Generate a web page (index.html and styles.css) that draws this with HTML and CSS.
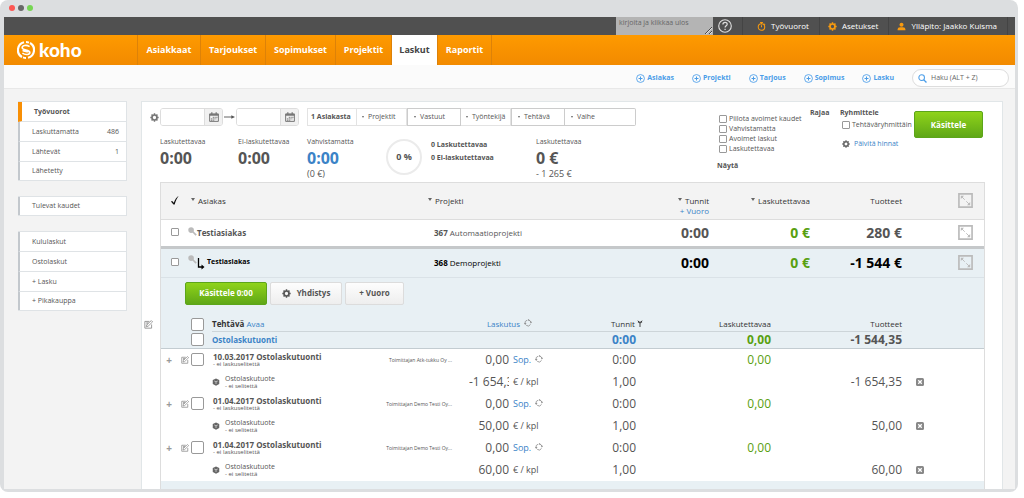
FILE: index.html
```
<!DOCTYPE html>
<html lang="fi">
<head>
    <meta charset="UTF-8">
    <meta name="viewport" content="width=device-width, initial-scale=1.0">
    <title>Koho - Laskut</title>
    <link rel="stylesheet" href="styles.css">
</head>
<body>
    <!-- Icons used on the page -->
    <svg class="sprite" aria-hidden="true">
        <symbol id="i-gear" viewBox="0 0 16 16">
            <circle cx="8" cy="8" r="4.4" fill="none" stroke="currentColor" stroke-width="3"/>
            <path d="M8 0.6v3M8 12.4v3M0.6 8h3M12.4 8h3M2.8 2.8l2 2M11.2 11.2l2 2M2.8 13.2l2-2M11.2 4.8l2-2" stroke="currentColor" stroke-width="2.6"/>
        </symbol>
        <symbol id="i-plus" viewBox="0 0 16 16">
            <circle cx="8" cy="8" r="7" fill="none" stroke="currentColor" stroke-width="1.5"/>
            <path d="M8 4.5v7M4.5 8h7" stroke="currentColor" stroke-width="1.8"/>
        </symbol>
        <symbol id="i-calendar" viewBox="0 0 16 16">
            <path d="M1 3h14v12H1z" fill="none" stroke="currentColor" stroke-width="1.6"/>
            <path d="M1 4.5h14" stroke="currentColor" stroke-width="3"/>
            <path d="M4.5 0.5v4M11.5 0.5v4" stroke="currentColor" stroke-width="2"/>
            <path d="M6 8.5h8M3 11h9M3 13.2h6" stroke="currentColor" stroke-width="1.5" stroke-dasharray="2 0.8"/>
        </symbol>
        <symbol id="i-expand" viewBox="0 0 16 16">
            <path d="M1 1h14v14H1z" fill="none" stroke="currentColor" stroke-width="1.8"/>
            <path d="M4 4l3.2 3.2M8.8 8.8L12 12" fill="none" stroke="currentColor" stroke-width="1"/>
            <path d="M3 3h3.4L3 6.4zM13 13H9.6L13 9.6z" fill="currentColor"/>
        </symbol>
        <symbol id="i-key" viewBox="0 0 16 16">
            <circle cx="5.5" cy="5.5" r="5" fill="currentColor"/>
            <path d="M8 8l6.5 6.5" stroke="currentColor" stroke-width="3"/>
        </symbol>
        <symbol id="i-edit" viewBox="0 0 16 16">
            <path d="M13.5 8v6.5h-12v-12h8" fill="none" stroke="currentColor" stroke-width="1.5"/>
            <path d="M4 12l1-3.4L13 1l2.3 2.3-8 7.8zM4 7h3M4 5h4" fill="none" stroke="currentColor" stroke-width="1.4"/>
        </symbol>
        <symbol id="i-refresh" viewBox="0 0 16 16">
            <path d="M2 9.5a6 6 0 0 1 4-7M9.5 2.2a6 6 0 0 1 4.3 4.6M13 11a6 6 0 0 1-8.5 1.8" fill="none" stroke="currentColor" stroke-width="1.6"/>
            <path d="M0 8l2.4 4L5 8.4zM12 8.5l3.6-.6L14 4zM8 0l-.5 4L11 2z" fill="currentColor"/>
        </symbol>
        <symbol id="i-cube" viewBox="0 0 16 16">
            <path d="M8 1l6.5 3v8L8 15.4 1.5 12V4z" fill="currentColor"/>
            <path d="M4.5 6L8 7.6 11.500 6M8 7.600V12" fill="none" stroke="#fff" stroke-width="1.1"/>
        </symbol>
        <symbol id="i-delete" viewBox="0 0 16 16">
            <rect width="16" height="16" rx="3" fill="currentColor"/>
            <path d="M4.5 4.5l7 7M11.5 4.5l-7 7" stroke="#fff" stroke-width="2.6"/>
        </symbol>
    </svg>

    <div class="window">
        <div class="titlebar">
            <span class="dot red"></span>
            <span class="dot gray"></span>
            <span class="dot green"></span>
        </div>

        <div class="topbar">
            <textarea class="note" aria-label="Muistio" placeholder="kirjoita ja klikkaa ulos"></textarea>
            <a class="help" href="#" aria-label="Ohje">
                <svg class="icon-help" viewBox="0 0 16 16"><circle cx="8" cy="8" r="7.2" fill="none" stroke="currentColor" stroke-width="1.3"/><path d="M5.6 6.3c0-3.3 4.9-3.2 4.9-.3 0 1.7-2.4 1.8-2.4 3.7M8.1 11v1.6" fill="none" stroke="currentColor" stroke-width="1.4"/></svg>
            </a>
            <a href="#">
                <svg class="icon" viewBox="0 0 16 16"><circle cx="8" cy="9" r="5.8" fill="none" stroke="currentColor" stroke-width="1.8"/><path d="M5.5 1h5M8 1v3M8 9.5V5.8M12.8 3.2l1.6 1.6" stroke="currentColor" stroke-width="1.8"/></svg>
                Työvuorot
            </a>
            <a href="#"><svg class="icon"><use href="#i-gear"/></svg>Asetukset</a>
            <a href="#">
                <svg class="icon" viewBox="0 0 16 16"><circle cx="8" cy="5" r="3.6" fill="currentColor"/><path d="M1 14.5c0-5 3-5 7-5s7 0 7 5z" fill="currentColor"/></svg>
                Ylläpito: Jaakko Kuisma
            </a>
        </div>

        <header class="navbar">
            <a class="brand" href="#">
                <svg class="brand-mark" viewBox="0 0 18 18"><path d="M7 1.3A8 8 0 0 0 5 16M11 16.700A8 8 0 0 0 13 2" fill="none" stroke="#fff" stroke-width="2.2"/><path d="M9 1a8 8 0 0 1 3 .6M6 16.400a8 8 0 0 0 3 .6" fill="none" stroke="#fff" stroke-width="1.8"/><path d="M12.600 5.600C9 3.400 5 4.600 5.200 7c.2 2.200 7.400 1.800 7.600 4.200.1 2.300-4 3.300-7.400 1M5.600 9.400c1.800 1.600 5 .6 5.400 2" fill="none" stroke="#fff" stroke-width="1.600"/></svg>
                koho
            </a>
            <nav>
                <a href="#">Asiakkaat</a>
                <a href="#">Tarjoukset</a>
                <a href="#">Sopimukset</a>
                <a href="#">Projektit</a>
                <a class="active" href="#">Laskut</a>
                <a href="#">Raportit</a>
            </nav>
        </header>

        <div class="actions">
            <a href="#"><svg class="icon"><use href="#i-plus"/></svg>Asiakas</a>
            <a href="#"><svg class="icon"><use href="#i-plus"/></svg>Projekti</a>
            <a href="#"><svg class="icon"><use href="#i-plus"/></svg>Tarjous</a>
            <a href="#"><svg class="icon"><use href="#i-plus"/></svg>Sopimus</a>
            <a href="#"><svg class="icon"><use href="#i-plus"/></svg>Lasku</a>
            <label class="search">
                <svg class="icon" viewBox="0 0 16 16"><circle cx="6.5" cy="6.5" r="5" fill="none" stroke="currentColor" stroke-width="1.8"/><path d="M10 10l5 5" stroke="currentColor" stroke-width="2.4"/></svg>
                <input type="text" aria-label="Haku" placeholder="Haku (ALT + Z)">
            </label>
        </div>

        <div class="content">
            <aside class="sidebar">
                <div class="menu">
                    <a class="current" href="#">Työvuorot</a>
                    <a href="#">Laskuttamatta <span>486</span></a>
                    <a href="#">Lähtevät <span>1</span></a>
                    <a href="#">Lähetetty</a>
                </div>
                <div class="menu">
                    <a href="#">Tulevat kaudet</a>
                </div>
                <div class="menu">
                    <a href="#">Kululaskut</a>
                    <a href="#">Ostolaskut</a>
                    <a href="#">+ Lasku</a>
                    <a href="#">+ Pikakauppa</a>
                </div>
            </aside>

            <main class="panel">
                <div class="panel-head">
                    <div class="overview">
                        <div class="filters">
                            <svg class="icon filter-gear"><use href="#i-gear"/></svg>
                            <div class="date"><input type="text" aria-label="Alkaen"><button aria-label="Valitse alkupäivä"><svg class="icon-cal"><use href="#i-calendar"/></svg></button></div>
                            <svg class="arrow" viewBox="0 0 12 6"><path d="M0 3h10" stroke="currentColor"/><path d="M8 1l4 2-4 2z" fill="currentColor"/></svg>
                            <div class="date"><input type="text" aria-label="Päättyen"><button aria-label="Valitse loppupäivä"><svg class="icon-cal"><use href="#i-calendar"/></svg></button></div>
                            <div class="filter-group">
                                <button class="chosen">1 Asiakasta</button>
                                <button><i class="caret"></i>Projektit</button>
                                <button class="boxed"><i class="caret"></i>Vastuut</button>
                                <button><i class="caret"></i>Työntekijä</button>
                                <button class="boxed"><i class="caret"></i>Tehtävä</button>
                                <button class="boxed"><i class="caret"></i>Vaihe</button>
                            </div>
                        </div>
                        <div class="stats">
                            <div class="stat">
                                <span>Laskutettavaa</span>
                                <strong>0:00</strong>
                            </div>
                            <div class="stat">
                                <span>Ei-laskutettavaa</span>
                                <strong>0:00</strong>
                            </div>
                            <div class="stat">
                                <span>Vahvistamatta</span>
                                <strong class="blue">0:00</strong>
                                <small>(0 €)</small>
                            </div>
                            <div class="ring">0 %</div>
                            <div class="counts">
                                <b>0 Laskutettavaa</b>
                                <b>0 Ei-laskutettavaa</b>
                            </div>
                            <div class="stat">
                                <span>Laskutettavaa</span>
                                <strong>0 €</strong>
                                <small>- 1 265 €</small>
                            </div>
                        </div>
                    </div>

                    <div class="show">
                        <label><input type="checkbox">Piilota avoimet kaudet</label>
                        <label><input type="checkbox">Vahvistamatta</label>
                        <label><input type="checkbox">Avoimet laskut</label>
                        <label><input type="checkbox">Laskutettavaa</label>
                        <b>Näytä</b>
                    </div>
                    <b class="limit">Rajaa</b>
                    <div class="grouping">
                        <b>Ryhmittele</b>
                        <label><input type="checkbox">Tehtäväryhmittäin</label>
                        <a href="#"><svg class="icon"><use href="#i-gear"/></svg>Päivitä hinnat</a>
                    </div>
                    <button class="btn-green process">Käsittele</button>
                </div>

                <div class="sheet">
                    <table class="invoices">
                        <colgroup>
                            <col class="w-check"><col class="w-client"><col><col class="w-hours"><col class="w-billable"><col class="w-products"><col class="w-expand">
                        </colgroup>
                        <thead>
                            <tr>
                                <th><svg class="tick" viewBox="0 0 16 16"><path d="M1.5 10.5l2-1 2.5 3C8 7 10.5 3 14 1c-3 4-5 8-6.5 14H5.5z" fill="#111"/></svg></th>
                                <th class="left indent"><i class="caret down"></i>Asiakas</th>
                                <th class="left"><i class="caret down"></i>Projekti</th>
                                <th class="stacked"><i class="caret down"></i>Tunnit<a href="#">+ Vuoro</a></th>
                                <th><i class="caret down"></i>Laskutettavaa</th>
                                <th>Tuotteet</th>
                                <th><svg class="icon-expand"><use href="#i-expand"/></svg></th>
                            </tr>
                        </thead>
                        <tbody>
                            <tr class="plain">
                                <td><input type="checkbox" aria-label="Valitse 367"></td>
                                <td class="left client"><svg class="icon-key"><use href="#i-key"/></svg><b>Testiasiakas</b></td>
                                <td class="left project"><b>367</b> Automaatioprojekti</td>
                                <td class="sum">0:00</td>
                                <td class="sum green">0 €</td>
                                <td class="sum">280 €</td>
                                <td><svg class="icon-expand"><use href="#i-expand"/></svg></td>
                            </tr>
                            <tr class="open">
                                <td><input type="checkbox" aria-label="Valitse 368"></td>
                                <td class="left client"><svg class="icon-key"><use href="#i-key"/></svg><svg class="icon-sub" viewBox="0 0 8 12"><path d="M1.5 0v9H6" fill="none" stroke="#000" stroke-width="1.3"/><path d="M4.5 6.5L7.5 9l-3 2.5z" fill="#000"/></svg><b>Testiasiakas</b></td>
                                <td class="left project"><b>368</b> Demoprojekti</td>
                                <td class="sum">0:00</td>
                                <td class="sum green">0 €</td>
                                <td class="sum">-1 544 €</td>
                                <td><svg class="icon-expand"><use href="#i-expand"/></svg></td>
                            </tr>
                        </tbody>
                    </table>

                    <div class="detail">
                        <div class="detail-buttons">
                            <button class="btn-green">Käsittele 0:00</button>
                            <button class="btn-light"><svg class="icon"><use href="#i-gear"/></svg>Yhdistys</button>
                            <button class="btn-light">+ Vuoro</button>
                        </div>
                        <svg class="icon outer-edit"><use href="#i-edit"/></svg>

                        <table class="tasks">
                            <colgroup>
                                <col class="t-plus"><col class="t-edit"><col class="t-check"><col><col class="t-supplier"><col class="t-price"><col class="t-unit"><col class="t-hours"><col class="t-billable"><col class="t-products"><col class="t-delete">
                            </colgroup>
                            <thead>
                                <tr>
                                    <td></td><td></td>
                                    <td><input class="big" type="checkbox" aria-label="Valitse kaikki"></td>
                                    <th class="left line"><b>Tehtävä</b> <a href="#">Avaa</a></th>
                                    <th class="line"></th>
                                    <th class="line billing" colspan="2"><a href="#">Laskutus</a><svg class="icon"><use href="#i-refresh"/></svg></th>
                                    <th class="line">Tunnit <svg class="icon-filter" viewBox="0 0 8 10"><path d="M1 1l3 4 3-4M1 3h6M4 5v5" fill="none" stroke="currentColor" stroke-width="1.3"/></svg></th>
                                    <th class="line">Laskutettavaa</th>
                                    <th class="line">Tuotteet</th>
                                    <td></td>
                                </tr>
                                <tr class="totals">
                                    <td></td><td></td>
                                    <td><input class="big" type="checkbox" aria-label="Valitse Ostolaskutuonti"></td>
                                    <td class="left"><a href="#">Ostolaskutuonti</a></td>
                                    <td></td><td></td><td></td>
                                    <td class="blue">0:00</td>
                                    <td class="green">0,00</td>
                                    <td>-1 544,35</td>
                                    <td></td>
                                </tr>
                            </thead>
                            <tbody>
                                <tr>
                                    <td class="add">+</td>
                                    <td class="edit"><svg class="icon"><use href="#i-edit"/></svg></td>
                                    <td><input class="big" type="checkbox" aria-label="Valitse rivi 1"></td>
                                    <td class="left task"><b>10.03.2017</b> <b>Ostolaskutuonti</b><small>- ei laskuselitettä</small></td>
                                    <td class="supplier">Toimittajan Atk-tukku Oy ...</td>
                                    <td>0,00</td>
                                    <td class="unit"><a href="#">Sop.</a><svg class="icon"><use href="#i-refresh"/></svg></td>
                                    <td>0:00</td>
                                    <td class="green">0,00</td>
                                    <td></td><td></td>
                                </tr>
                                <tr>
                                    <td></td><td></td><td></td>
                                    <td class="left product" colspan="2"><svg class="icon"><use href="#i-cube"/></svg><span>Ostolaskutuote<small>- ei selitettä</small></span></td>
                                    <td><input class="price" type="text" aria-label="Hinta" value="-1 654,35"></td>
                                    <td class="unit">€ / kpl</td>
                                    <td>1,00</td>
                                    <td></td>
                                    <td>-1 654,35</td>
                                    <td class="remove"><button aria-label="Poista"><svg class="icon"><use href="#i-delete"/></svg></button></td>
                                </tr>
                                <tr>
                                    <td class="add">+</td>
                                    <td class="edit"><svg class="icon"><use href="#i-edit"/></svg></td>
                                    <td><input class="big" type="checkbox" aria-label="Valitse rivi 2"></td>
                                    <td class="left task"><b>01.04.2017</b> <b>Ostolaskutuonti</b><small>- ei laskuselitettä</small></td>
                                    <td class="supplier">Toimittajan Demo Testi Oy...</td>
                                    <td>0,00</td>
                                    <td class="unit"><a href="#">Sop.</a><svg class="icon"><use href="#i-refresh"/></svg></td>
                                    <td>0:00</td>
                                    <td class="green">0,00</td>
                                    <td></td><td></td>
                                </tr>
                                <tr>
                                    <td></td><td></td><td></td>
                                    <td class="left product" colspan="2"><svg class="icon"><use href="#i-cube"/></svg><span>Ostolaskutuote<small>- ei selitettä</small></span></td>
                                    <td><input class="price" type="text" aria-label="Hinta" value="50,00"></td>
                                    <td class="unit">€ / kpl</td>
                                    <td>1,00</td>
                                    <td></td>
                                    <td>50,00</td>
                                    <td class="remove"><button aria-label="Poista"><svg class="icon"><use href="#i-delete"/></svg></button></td>
                                </tr>
                                <tr>
                                    <td class="add">+</td>
                                    <td class="edit"><svg class="icon"><use href="#i-edit"/></svg></td>
                                    <td><input class="big" type="checkbox" aria-label="Valitse rivi 3"></td>
                                    <td class="left task"><b>01.04.2017</b> <b>Ostolaskutuonti</b><small>- ei laskuselitettä</small></td>
                                    <td class="supplier">Toimittajan Demo Testi Oy...</td>
                                    <td>0,00</td>
                                    <td class="unit"><a href="#">Sop.</a><svg class="icon"><use href="#i-refresh"/></svg></td>
                                    <td>0:00</td>
                                    <td class="green">0,00</td>
                                    <td></td><td></td>
                                </tr>
                                <tr>
                                    <td></td><td></td><td></td>
                                    <td class="left product" colspan="2"><svg class="icon"><use href="#i-cube"/></svg><span>Ostolaskutuote<small>- ei selitettä</small></span></td>
                                    <td><input class="price" type="text" aria-label="Hinta" value="60,00"></td>
                                    <td class="unit">€ / kpl</td>
                                    <td>1,00</td>
                                    <td></td>
                                    <td>60,00</td>
                                    <td class="remove"><button aria-label="Poista"><svg class="icon"><use href="#i-delete"/></svg></button></td>
                                </tr>
                            </tbody>
                        </table>
                    </div>
                </div>
            </main>
        </div>
    </div>
</body>
</html>
```
FILE: styles.css
```
* {
    box-sizing: border-box;
}

body {
    margin: 0;
    background: #fff;
    font-family: "Open Sans", "Noto Sans", sans-serif;
    font-size: 7px;
    line-height: 10px;
    color: #555;
}

a {
    color: #3b83c7;
    text-decoration: none;
}

button,
input,
textarea {
    margin: 0;
    font: inherit;
    color: inherit;
}

input[type="checkbox"] {
    appearance: none;
    flex: none;
    width: 8px;
    height: 8px;
    border: 1px solid #999;
    border-radius: 1px;
    background: #fff;
}

.sprite {
    display: none;
}

.icon {
    flex: none;
    width: 9px;
    height: 9px;
}

.green {
    color: #58a010;
}

.blue {
    color: #3b83c7;
}

.left {
    text-align: left;
}

.window {
    margin-right: 6px;
    padding: 0 3px 3px 4px;
    background: #dcdee0;
    border-radius: 8px;
    overflow: hidden;
}

.titlebar {
    display: flex;
    gap: 3px;
    height: 17px;
    padding: 5px;
}

.dot {
    width: 6px;
    height: 6px;
    border-radius: 50%;
}

.red {
    background: #fc5753;
}

.gray {
    background: #686868;
}

.dot.green {
    background: #76d653;
}

/* Dark bar */
.topbar {
    display: flex;
    justify-content: flex-end;
    height: 18px;
    padding-right: 7px;
    background: #505050;
    font-size: 8px;
}

.topbar a {
    display: flex;
    align-items: center;
    gap: 5px;
    padding: 0 10px 0 8px;
    border-right: 1px solid #444;
    color: #fff;
}

.topbar .icon {
    color: #f79a10;
}

.topbar .help {
    margin-right: 6px;
    padding: 0 10px 0 5px;
    color: #ddd;
}

.icon-help {
    width: 14px;
    height: 14px;
}

.note {
    width: 97px;
    height: 18px;
    padding: 0 3px;
    border: 0;
    background: #b4b4b4;
    font-size: 7px;
    line-height: 11px;
    overflow: hidden;
}

.note::placeholder {
    color: #666;
}

/* Orange navigation */
.navbar {
    display: flex;
    height: 30px;
    background: linear-gradient(#fe9a00, #f28a00);
}

.brand {
    display: flex;
    align-items: center;
    gap: 4px;
    width: 134px;
    padding-left: 13px;
    border-right: 1px solid #dd8208;
    font-family: Lato, sans-serif;
    font-size: 19px;
    font-weight: 900;
    color: #fff;
}

.brand-mark {
    width: 18px;
    height: 18px;
}

nav {
    display: grid;
    grid-template-columns: 63px 65px 70px 56px 46px 54px;
    font-size: 9px;
    font-weight: bold;
}

nav a {
    display: flex;
    align-items: center;
    justify-content: center;
    border-right: 1px solid #dd8208;
    color: #fff;
}

nav .active {
    background: #fff;
    color: #444;
}

/* Quick links and search */
.actions {
    display: flex;
    justify-content: flex-end;
    align-items: center;
    gap: 18px;
    height: 24px;
    padding: 3px 6px 0 0;
    background: #fbfbfb;
    border-bottom: 1px solid #e8e8e8;
    font-weight: bold;
}

.actions a {
    display: flex;
    align-items: center;
    gap: 2px;
    color: #4a9de8;
}

.search {
    display: flex;
    align-items: center;
    gap: 4px;
    width: 97px;
    height: 18px;
    padding: 0 5px;
    border: 1px solid #ddd;
    border-radius: 9px;
    background: #fff;
    color: #4a9de8;
    font-weight: normal;
}

.search input {
    width: 100%;
    padding: 0;
    border: 0;
    background: none;
}

.search input::placeholder {
    color: #666;
}

.content {
    display: flex;
    gap: 14px;
    padding: 12px 12px 0 14px;
    background: #f3f3f3;
}

/* Left menu */
.sidebar {
    display: flex;
    flex-direction: column;
    gap: 15px;
    width: 109px;
}

.menu {
    border: 1px solid #dfe3e6;
    border-left: 0;
    background: #fff;
}

.menu a {
    display: flex;
    justify-content: space-between;
    align-items: center;
    height: 20px;
    padding: 0 7px 0 12px;
    border-left: 2px solid #c3c8cd;
    border-bottom: 1px solid #dfe3e6;
    color: #555;
}

.menu a:last-child {
    height: 18px;
    border-bottom: 0;
}

.menu .current {
    border-left: 4px solid #f88f05;
    font-weight: bold;
}

.panel {
    flex: 1;
    min-width: 0;
    padding: 0 17px 0 18px;
    border: 1px solid #e1e6e8;
    border-bottom: 0;
    background: #fff;
}

.panel-head {
    display: flex;
    height: 80px;
    padding-top: 6px;
}

.overview {
    flex: 1;
}

.filters {
    display: flex;
    align-items: center;
    height: 18px;
}

.filter-gear {
    margin: 0 1px 0 -10px;
    color: #777;
}

.date {
    display: flex;
    width: 63px;
    height: 18px;
    border: 1px solid #ddd;
    border-radius: 3px;
    overflow: hidden;
}

.date input {
    flex: 1;
    width: 0;
    border: 0;
}

.date button {
    width: 18px;
    padding: 0;
    border: 0;
    border-left: 1px solid #ddd;
    background: #f1f1f1;
    color: #777;
}

.icon-cal {
    display: block;
    width: 10px;
    height: 10px;
    margin: auto;
}

.arrow {
    width: 11px;
    height: 6px;
    margin: 0 1px;
}

.filter-group {
    display: grid;
    grid-template-columns: 50px 50px 54px 50px 54px 71px;
    height: 18px;
    margin-left: 8px;
}

.filter-group button {
    display: flex;
    align-items: center;
    padding: 0 0 0 5px;
    border: 1px solid #e3e3e3;
    border-left-width: 0;
    background: #fff;
    white-space: nowrap;
}

.filter-group .chosen {
    padding-left: 3px;
    border-left-width: 1px;
    font-weight: bold;
}

.filter-group .boxed {
    padding-left: 6px;
    border: 1px solid #ccc;
}

.filter-group .boxed:last-child {
    border-left: 0;
    border-radius: 0 2px 2px 0;
}

.caret {
    display: inline-block;
    flex: none;
    margin-right: 4px;
    border: 1px solid transparent;
    border-top: 2px solid #666;
}

.caret.down {
    border-width: 3px 2px 0;
    margin-right: 3px;
    vertical-align: 3px;
}

.stats {
    display: grid;
    grid-template-columns: 78px 69px 79px 45px 105px auto;
    margin-top: 11px;
}

.stat span,
.stat strong,
.stat small,
.counts b {
    display: block;
}

.stat strong {
    font-size: 16px;
    line-height: 22px;
}

.stat small {
    font-size: 9px;
}

.ring {
    width: 36px;
    height: 36px;
    margin-top: 2px;
    border: 2px solid #ebebeb;
    border-radius: 50%;
    font-size: 9px;
    font-weight: bold;
    line-height: 32px;
    text-align: center;
}

.counts {
    padding-top: 1px;
}

.counts b {
    line-height: 13px;
}

.show {
    width: 93px;
    padding-top: 6px;
}

.show label,
.grouping label,
.grouping a {
    display: flex;
    align-items: center;
    gap: 2px;
    padding-left: 2px;
    white-space: nowrap;
}

.show b {
    display: block;
    margin-top: 7px;
}

.limit {
    width: 30px;
}

.grouping {
    width: 74px;
    overflow: hidden;
}

.grouping label {
    margin-top: 2px;
}

.grouping a {
    gap: 4px;
    margin-top: 9px;
}

.grouping .icon {
    width: 8px;
    height: 8px;
    color: #666;
}

.btn-green,
.btn-light {
    display: flex;
    justify-content: center;
    align-items: center;
    gap: 6px;
    border: 1px solid #5ca51a;
    border-radius: 2px;
    background: linear-gradient(#8fd31a, #5fa717);
    color: #fff;
    font-size: 8px;
    font-weight: bold;
}

.btn-light {
    border-color: #dcdcdc;
    background: linear-gradient(#fdfdfd, #eee);
    color: #555;
}

.process {
    width: 69px;
    height: 27px;
    margin: 3px 2px 0 0;
}

/* Invoice table */
.sheet {
    border: 1px solid #ddd;
    border-bottom: 0;
}

table {
    width: 100%;
    border-collapse: collapse;
    table-layout: fixed;
}

th,
td {
    padding: 0;
    text-align: right;
    font-weight: normal;
}

.invoices th {
    height: 36px;
    background: #f3f3f3;
    border-bottom: 1px solid #ddd;
    font-size: 8px;
    color: #333;
}

.invoices td {
    height: 28px;
    font-size: 8px;
}

.invoices th:first-child,
.invoices td:first-child,
.invoices th:last-child,
.invoices td:last-child {
    text-align: center;
}

.w-check {
    width: 27px;
}

.w-client {
    width: 240px;
}

.w-hours {
    width: 110px;
}

.w-billable {
    width: 101px;
}

.w-products {
    width: 92px;
}

.w-expand {
    width: 82px;
}

.invoices .left {
    text-align: left;
}

.invoices .indent {
    padding-left: 3px;
}

.stacked a {
    display: block;
    margin-bottom: -10px;
}

.tick {
    width: 10px;
    height: 10px;
}

.icon-expand {
    display: inline-block;
    width: 15px;
    height: 15px;
    margin-left: 44px;
    color: #bbb;
    vertical-align: middle;
}

.icon-key {
    width: 9px;
    height: 9px;
    color: #bbb;
}

.icon-sub {
    width: 8px;
    height: 12px;
    margin: 0 2px 0 0;
    vertical-align: -6px;
}

.invoices .project {
    padding-left: 6px;
}

.invoices .sum {
    font-size: 14px;
    font-weight: bold;
}

.open td {
    border-top: 3px solid #c5c8ca;
    border-bottom: 1px solid #dae2e7;
    background: #e8f0f4;
    color: #000;
    height: 30px;
}

.open .client {
    font-size: 7px;
}

.open td.green {
    color: #58a010;
}

.detail {
    position: relative;
    padding-bottom: 8px;
    background: #e8f0f4;
}

.detail-buttons {
    display: flex;
    gap: 3px;
    padding: 4px 0 13px 24px;
}

.detail-buttons button {
    width: 72px;
    height: 23px;
}

.detail-buttons .btn-green {
    width: 82px;
}

.detail-buttons .btn-light:last-child {
    width: 59px;
}

/* Sits in the margin left of the table */
.outer-edit {
    position: absolute;
    left: -17px;
    top: 42px;
    color: #888;
}

.t-plus {
    width: 17px;
}

.t-edit {
    width: 13px;
}

.t-check {
    width: 21px;
}

.t-supplier {
    width: 72px;
}

.t-price {
    width: 57px;
}

.t-unit {
    width: 45px;
}

.t-hours {
    width: 82px;
}

.t-billable {
    width: 135px;
}

.t-products {
    width: 131px;
}

.t-delete {
    width: 82px;
}

.tasks td {
    height: 22px;
    font-size: 12px;
    white-space: nowrap;
}

.tasks .left {
    text-align: left;
}

.tasks .icon {
    display: inline-block;
    width: 8px;
    height: 8px;
    color: #888;
}

.tasks thead td,
.tasks thead th {
    height: 14px;
    font-size: 8px;
    color: #333;
}

.tasks .line {
    border-bottom: 1px solid #cdd5d9;
    white-space: nowrap;
}

.tasks .billing {
    padding-right: 22px;
}

.tasks .billing .icon {
    margin-left: 4px;
}

/* Hangs past the edge so the label lines up with the hours */
.icon-filter {
    width: 6px;
    height: 7px;
    margin-right: -7px;
}

.tasks .totals td {
    height: 17px;
    border-bottom: 1px solid #c3ccd1;
    font-size: 12px;
    font-weight: bold;
    color: #555;
}

.tasks .totals td.left {
    font-size: 8px;
}

.tasks .totals td.blue {
    color: #3b83c7;
}

.tasks .totals td.green {
    color: #58a010;
}

.tasks tbody {
    background: #fff;
}

.tasks tbody .green {
    color: #58a010;
}

.tasks .big {
    display: block;
    width: 13px;
    height: 13px;
    border-radius: 2px;
}

.tasks .add {
    padding-right: 6px;
    font-size: 10px;
    font-weight: bold;
    color: #999;
}

.tasks .edit {
    padding-right: 2px;
}

.tasks .task,
.tasks .product {
    font-size: 8px;
    line-height: 8px;
}

.tasks .task {
    padding-left: 1px;
}

.tasks small {
    display: block;
    font-size: 6px;
    line-height: 6px;
}

.tasks .product span {
    display: inline-block;
    margin-left: 5px;
    vertical-align: middle;
    font-size: 7px;
    line-height: 9px;
}

.tasks .product .icon {
    vertical-align: middle;
    color: #666;
}

.tasks .supplier {
    font-size: 5px;
}

.tasks .unit {
    padding-left: 4px;
    text-align: left;
    font-size: 9px;
}

.tasks .unit .icon {
    margin-left: 4px;
}

.price {
    width: 40px;
    padding: 0;
    border: 0;
    background: none;
    text-align: right;
}

.remove button {
    display: block;
    margin-left: 14px;
    padding: 0;
    border: 0;
    background: none;
}

.remove .icon {
    display: block;
}
```
